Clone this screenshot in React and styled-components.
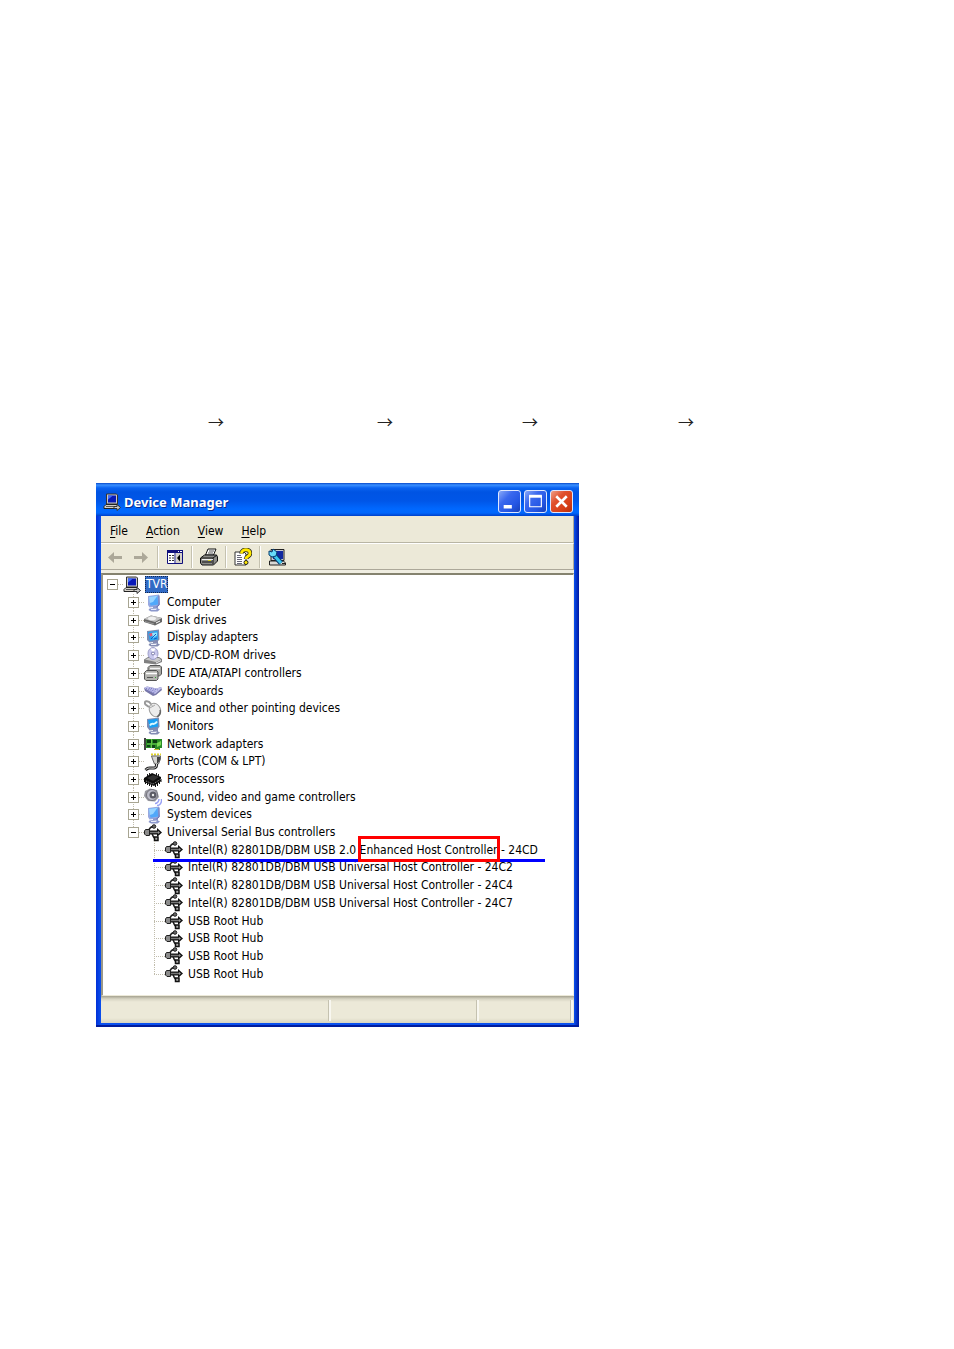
import React from 'react';
import styled, { createGlobalStyle, css } from 'styled-components';

const GlobalStyle = createGlobalStyle`
    * {
        box-sizing: border-box;
    }

    body {
        margin: 0;
        background: #fff;
        color: #000;
        font-family: 'DejaVu Sans Condensed', 'DejaVu Sans', sans-serif;
        font-size: 12px;
    }

    button {
        padding: 0;
        border: 0;
        background: none;
        color: inherit;
        font: inherit;
    }
`;

/* ---------- icons ---------- */

const Icon = ({ size = 18, children }) => (
    <svg width={size} height={size} viewBox="0 0 18 18" aria-hidden="true">{children}</svg>
);

const rootIcon = (
    <Icon>
        <path d="M3.500 1h10l1 1v9h-11z" fill="#c8c8cc" stroke="#333" />
        <path d="M5 2.500h8v7H5z" fill="#0818b8" />
        <path d="M5 2.500h5l-5 4z" fill="#3c6cff" />
        <path d="M3 11.500h11l2 2v2H1v-2z" fill="#d4d0c8" stroke="#222" />
        <path d="M3 13.500h8" stroke="#555" />
        <path d="M11 13.500h3v-2l3.500 3-3.500 3v-2h-3z" fill="#ccc" stroke="#333" />
    </Icon>
);

const monitorIcon = (
    <Icon>
        <path d="M4 2l11-1.500 1 10-2 2-8.500 1L4 11z" fill="#98a8e0" />
        <path d="M5 3l8.500-1.200.7 8.700-7.700 1.200z" fill="#50a8fa" />
        <path d="M5 3l8.500-1.200L9 8l-3.200 1z" fill="#98d4ff" />
        <path d="M9 12.500l5-1v3l2 1-2.500 2H7L4.500 16l1-1.500L9 14z" fill="#8c98cc" />
        <path d="M7 15l6-.5-1 1.500H7z" fill="#e8ecfa" />
        <path d="M15 1.500v9.500l-2.500 2" fill="none" stroke="#6470b4" />
    </Icon>
);

const displayIcon = (
    <Icon>
        <path d="M3 2l12-1.500.5 10-2 2-8 1L3 11z" fill="#7c8cb4" />
        <path d="M4 3l9.500-1.200.5 8.700-8.300 1.200z" fill="#28a4f0" />
        <path d="M5 4.500l5-1-1 3-3 1z" fill="#e05878" />
        <path d="M8 4l5-.5v3L9 9z" fill="#90e4ff" />
        <path d="M7 10l5-5M10 10l3-1" stroke="#1858c0" />
        <path d="M9 12.500l5-1v3l2 1-2.500 2H7L4.500 16l1-1.500L9 14z" fill="#848cb4" />
        <path d="M7 15l6-.5-1 1.500H7z" fill="#f0f2fa" />
    </Icon>
);

const monitorsIcon = (
    <Icon>
        <path d="M3 2l12-1.500.5 9-2 3-8 1L3 10z" fill="#7c8cb4" />
        <path d="M4 3l9.500-1.200.5 7.700-8.300 1.500z" fill="#18a0f4" />
        <path d="M6 8.500c2-4 4 1 7-4" fill="none" stroke="#d8f8ff" strokeWidth="2" />
        <path d="M9 12.500l5-1v3l2 1-2.500 2H7L4.500 16l1-1.500L9 14z" fill="#848cb4" />
        <path d="M7 15l6-.5-1 1.500H7z" fill="#f0f2fa" />
    </Icon>
);

const diskIcon = (
    <Icon>
        <path d="M0 8l7-3.500L18 7v4l-7 3.500L0 11z" fill="#666" />
        <path d="M0 8l7-3.500L18 7l-7 4z" fill="#c4c4c4" />
        <ellipse cx="8" cy="7.500" rx="4" ry="1.800" fill="#f0f0f0" />
        <path d="M1 10.500l9 2.500" stroke="#999" />
        <path d="M12 12l4-2" stroke="#fff" />
    </Icon>
);

const cdIcon = (
    <Icon>
        <path d="M0 12.500L4 10h11l3 2v3l-6 2.500L0 16z" fill="#808080" />
        <path d="M1 12.500L4 11h11l2 1.500-5 2.500z" fill="#c8c8c8" />
        <ellipse cx="9" cy="6.500" rx="5" ry="6" fill="#c8c8ec" stroke="#9c9cc8" />
        <path d="M9 6L6.500 1.500h5z" fill="#fff" />
        <path d="M9 6.500l4.500 3-3 2z" fill="#ece8ff" />
        <circle cx="9" cy="6.500" r="1.500" fill="#fff" stroke="#7878a8" />
        <path d="M12 16l5-2.500" stroke="#eee" />
    </Icon>
);

const ideIcon = (
    <Icon>
        <path d="M4 3.500l2-2h10l1.500 1.500v7l-2 2H4z" fill="#a8a8a4" stroke="#555" />
        <path d="M6 4.500h10" stroke="#f4f4f4" strokeWidth="1.500" />
        <path d="M.5 8.500l2-2h10L14 8v7l-1.500 1.500H2L.5 15z" fill="#b4b4b0" stroke="#555" />
        <path d="M2 9.500h11" stroke="#fff" strokeWidth="1.500" />
        <path d="M3 13.500h6" stroke="#555" />
        <path d="M11 13.500h1" stroke="#3a3" />
    </Icon>
);

const keyboardIcon = (
    <Icon>
        <path d="M0 6l3-1.500 9.500 2L17 5l1 3-6 5-3 1-8-5z" fill="#7878a8" />
        <path d="M0 6l3-1.500 9.500 2L17 5l1 1-7 6z" fill="#c0c0ec" />
        <path d="M2 6.500l10 3M5 6l9 2M3 8.500l8 2.500" stroke="#7474c0" strokeDasharray="1 1" />
    </Icon>
);

const mouseIcon = (
    <Icon>
        <path d="M7 4C4-.5-1 1 1.500 4.500L5 7" fill="none" stroke="#999" strokeWidth="2" />
        <ellipse cx="11" cy="10" rx="5.500" ry="7" transform="rotate(-25 11 10)" fill="#ececec" stroke="#999" />
        <path d="M5 8.500l6-3.500M7 4l2 3" stroke="#aaa" />
        <path d="M16 10c1 3 0 5-3 7" fill="none" stroke="#666" strokeWidth="1.500" />
    </Icon>
);

const networkIcon = (
    <Icon>
        <path d="M1 4h17v9h-2v2h-5v-2H1z" fill="#2a8c28" />
        <path d="M1 3v12" stroke="#444" strokeWidth="2" />
        <path d="M3 5h4v3H3zM9 5h4v3H9z" fill="#0a3c10" />
        <path d="M3 10h3v2H3zM8 10h3v3H8z" fill="#104818" />
        <path d="M13 8l4-2v4l-4 2z" fill="#78d850" />
        <path d="M7.500 4v9M3 9h10" stroke="#64c848" />
        <path d="M10 14.500h5" stroke="#c8b830" />
    </Icon>
);

const portsIcon = (
    <Icon>
        <path d="M7 1.500h10" stroke="#e0d428" strokeWidth="2" strokeDasharray="2 1" />
        <path d="M7.500 3h9v3l-2 5h-4l-2-5z" fill="#d4d4d0" stroke="#666" />
        <path d="M13 4h3v3l-2 3h-1z" fill="#444" />
        <path d="M12.500 11v1c0 4-4 3-7 3-2 0-3 1-4 2" fill="none" stroke="#222" strokeWidth="3" />
        <path d="M12.500 11v1c0 4-4 3-7 3-2 0-3 1-4 2" fill="none" stroke="#ddd" />
    </Icon>
);

const cpuIcon = (
    <Icon>
        <path d="M0 7l8-5 9 4v4l-7 5-10-4z" fill="#0c0c0c" />
        <path d="M3 7l6-3 6 2-6 4z" fill="#303030" />
        <path d="M1.500 10v3M3.500 11v3M5.500 12v3M7.500 13v3M11.500 12v4M13.500 11v4M15.500 10v3M17 8v3" stroke="#111" />
        <path d="M3.500 5V3M5.500 4V2M12.500 4V2M14.500 5V3" stroke="#222" />
        <path d="M2 10l7 3 8-5" fill="none" stroke="#999" strokeDasharray="1 1" />
    </Icon>
);

const soundIcon = (
    <Icon>
        <path d="M1 3l5-2.500L13 2l2 7-4 4.500L4 13 0 8z" fill="#9898a0" />
        <circle cx="8" cy="7" r="5.500" fill="#bcbcc8" stroke="#74747c" />
        <circle cx="9" cy="7" r="3.500" fill="#5c5c66" />
        <circle cx="9" cy="7" r="1.200" fill="#eee" />
        <path d="M11 15.500c2 0 4-2 4-4.500M13 17.500c3 0 5-3 4.500-6.500" fill="none" stroke="#98a0f4" strokeWidth="1.500" />
    </Icon>
);

const usbIcon = (
    <Icon>
        <path d="M4.500 7C6 3 7 3 9 2.500M8 9c1 4 2 5.500 4 6" fill="none" stroke="#222" strokeWidth="1.500" />
        <path d="M5 8.500h9" stroke="#111" strokeWidth="4" />
        <path d="M13 4l5 4.500-5 4.500z" fill="#111" />
        <path d="M5 8.500h10" stroke="#777" strokeWidth="1.500" />
        <path d="M14 7l2 1.500-2 1.500z" fill="#999" />
        <path d="M.5 7l1-1.500h4v6H2L.5 10z" fill="#8c8c8c" stroke="#222" />
        <circle cx="10" cy="2.500" r="1.800" fill="#666" stroke="#222" />
        <path d="M10.500 13h3.500v3.500h-3.500z" fill="#aaa" stroke="#111" strokeWidth="1.500" />
    </Icon>
);

const backIcon = (
    <Icon><path d="M8 4v4h8v3H8v4L2 9.500z" fill="#aca899" /></Icon>
);

const forwardIcon = (
    <Icon><path d="M10 4v4H2v3h8v4l6-5.500z" fill="#aca899" /></Icon>
);

const propertiesIcon = (
    <Icon>
        <path d="M1.500 3h15v12.500h-15z" fill="#fff" stroke="#10107c" />
        <path d="M1 2h16v3H1z" fill="#10107c" />
        <path d="M12 3.500h1M14 3.500h2" stroke="#fff" />
        <path d="M9 5v11" stroke="#10107c" />
        <path d="M3 7.500h2M3 10h2M3 12.500h2M6 7.500h2M6 10h2M6 12.500h2" stroke="#333" />
        <path d="M10 5h6v10h-6z" fill="#d4d0c8" />
        <path d="M14 6.500v7L11 10z" fill="#000" />
    </Icon>
);

const printerIcon = (
    <Icon>
        <path d="M5.500 7l2.500-6h8l-2.500 6z" fill="#fff" stroke="#111" />
        <path d="M9 3h5M8 5h5" stroke="#555" />
        <path d="M.5 10l4-3h12l1 2v4l-4 4H2l-1.500-2z" fill="#8c8c88" stroke="#111" />
        <path d="M1 10h12l4-3M13 10v6" fill="none" stroke="#111" />
        <path d="M2 11.500h11" stroke="#eee" />
        <path d="M2 14h10" stroke="#111" />
        <path d="M8 12.500h3" stroke="#d8d020" />
    </Icon>
);

const helpIcon = (
    <Icon>
        <path d="M1 4h9l2 2v11H1z" fill="#fff" stroke="#333" />
        <path d="M3 7.500h4M3 9.500h5M3 11.500h5M3 13.500h5M3 15.500h5" stroke="#667" />
        <path d="M7.500 5.500c0-5 9-5 8.500 0 0 3-4 2.500-4 5.500" fill="none" stroke="#222" strokeWidth="4.500" />
        <path d="M7.500 5.500c0-5 9-5 8.500 0 0 3-4 2.500-4 5.500" fill="none" stroke="#ffe800" strokeWidth="3" />
        <circle cx="12" cy="14.500" r="2" fill="#ffe800" stroke="#222" />
    </Icon>
);

const scanIcon = (
    <Icon>
        <path d="M3 1.500h13v11H3z" fill="#c8c8d0" stroke="#222" />
        <path d="M5 3h10v8H5z" fill="#1028a0" />
        <path d="M1.500 13h14l2 2v2h-16z" fill="#d8d8d4" stroke="#222" />
        <path d="M5 6l8 9" stroke="#073c70" strokeWidth="5" />
        <path d="M5 6l8 9" stroke="#38c8f0" strokeWidth="3" />
        <path d="M1 3l3 1 1-3 4 3-1 4-4 1-3-2z" fill="#68dcf8" stroke="#073c70" />
        <path d="M14 15.500h3" stroke="#222" />
    </Icon>
);

const minimizeIcon = (
    <Icon size={21}><path d="M4 12h7v3H4z" fill="#fff" /></Icon>
);

const maximizeIcon = (
    <Icon size={21}>
        <path d="M4 4.500h10v9H4z" fill="none" stroke="#fff" />
        <path d="M3.500 4.500h11" stroke="#fff" strokeWidth="2.500" />
    </Icon>
);

const closeIcon = (
    <Icon size={21}><path d="M4.500 4.500l9 9M13.500 4.500l-9 9" stroke="#fff" strokeWidth="2.200" /></Icon>
);

/* ---------- data ---------- */

const menus = ['File', 'Action', 'View', 'Help'];

const tools = [
    { label: 'Properties', icon: propertiesIcon },
    { label: 'Print', icon: printerIcon },
    { label: 'Help', icon: helpIcon },
    { label: 'Scan for hardware changes', icon: scanIcon },
];

const nodes = [
    { level: 0, label: 'TVR', icon: rootIcon, open: true, selected: true },
    { level: 1, label: 'Computer', icon: monitorIcon },
    { level: 1, label: 'Disk drives', icon: diskIcon },
    { level: 1, label: 'Display adapters', icon: displayIcon },
    { level: 1, label: 'DVD/CD-ROM drives', icon: cdIcon },
    { level: 1, label: 'IDE ATA/ATAPI controllers', icon: ideIcon },
    { level: 1, label: 'Keyboards', icon: keyboardIcon },
    { level: 1, label: 'Mice and other pointing devices', icon: mouseIcon },
    { level: 1, label: 'Monitors', icon: monitorsIcon },
    { level: 1, label: 'Network adapters', icon: networkIcon },
    { level: 1, label: 'Ports (COM & LPT)', icon: portsIcon },
    { level: 1, label: 'Processors', icon: cpuIcon },
    { level: 1, label: 'Sound, video and game controllers', icon: soundIcon },
    { level: 1, label: 'System devices', icon: monitorIcon },
    { level: 1, label: 'Universal Serial Bus controllers', icon: usbIcon, open: true, last: true },
    {
        level: 2,
        label: <>Intel(R) 82801DB/DBM USB 2.0 <Marked>Enhanced Host Controller</Marked> - 24CD</>,
        icon: usbIcon,
        underlined: true,
    },
    { level: 2, label: 'Intel(R) 82801DB/DBM USB Universal Host Controller - 24C2', icon: usbIcon },
    { level: 2, label: 'Intel(R) 82801DB/DBM USB Universal Host Controller - 24C4', icon: usbIcon },
    { level: 2, label: 'Intel(R) 82801DB/DBM USB Universal Host Controller - 24C7', icon: usbIcon },
    { level: 2, label: 'USB Root Hub', icon: usbIcon },
    { level: 2, label: 'USB Root Hub', icon: usbIcon },
    { level: 2, label: 'USB Root Hub', icon: usbIcon },
    { level: 2, label: 'USB Root Hub', icon: usbIcon, last: true },
];

/* ---------- components ---------- */

function Marked({ children }) {
    return <MarkedStyled>{children}</MarkedStyled>;
}

function TreeRow({ level, label, icon, open, selected, last, underlined }) {
    return (
        <RowStyled role="treeitem" aria-level={level + 1} $level={level} $underlined={underlined}>
            <Branch $line={level > 0} $last={last}>
                {level < 2 && (
                    <Expander aria-label={open ? 'Collapse' : 'Expand'}>
                        <svg width="9" height="9" viewBox="0 0 9 9" aria-hidden="true">
                            <path d={open ? 'M2 4.500h5' : 'M2 4.500h5M4.500 2v5'} stroke="#000" />
                        </svg>
                    </Expander>
                )}
            </Branch>
            {icon}
            <Label $selected={selected}>{label}</Label>
        </RowStyled>
    );
}

function App() {
    return (
        <>
            <GlobalStyle />
            <Page>
                <Steps>
                    <span>→</span>
                    <span>→</span>
                    <span>→</span>
                    <span>→</span>
                </Steps>
                <Window>
                    <TitleBar>
                        {rootIcon}
                        <h1>Device Manager</h1>
                        <CaptionButton aria-label="Minimize">{minimizeIcon}</CaptionButton>
                        <CaptionButton aria-label="Maximize">{maximizeIcon}</CaptionButton>
                        <CaptionButton aria-label="Close" $close>{closeIcon}</CaptionButton>
                    </TitleBar>
                    <MenuBar>
                        {menus.map(name => (
                            <MenuButton key={name}><u>{name[0]}</u>{name.slice(1)}</MenuButton>
                        ))}
                    </MenuBar>
                    <ToolBar>
                        <ToolButton aria-label="Back" disabled>{backIcon}</ToolButton>
                        <ToolButton aria-label="Forward" disabled>{forwardIcon}</ToolButton>
                        {tools.map(({ label, icon }) => (
                            <React.Fragment key={label}>
                                <Separator />
                                <ToolButton aria-label={label}>{icon}</ToolButton>
                            </React.Fragment>
                        ))}
                    </ToolBar>
                    <Panel>
                        <Tree role="tree">
                            {nodes.map((node, i) => <TreeRow key={i} {...node} />)}
                        </Tree>
                    </Panel>
                    <StatusBar>
                        <span />
                        <span />
                        <span />
                    </StatusBar>
                </Window>
            </Page>
        </>
    );
}

const Page = styled.main`
    padding: 409px 96px 322px;
`;

const Steps = styled.div`
    display: grid;
    grid-template-columns: 169px 145px 156px auto;
    padding-left: 112px;
    margin-bottom: 50px;
    color: #222;
    font-family: 'Noto Sans CJK JP', sans-serif;
    font-size: 16px;
    line-height: 24px;
`;

const Window = styled.section`
    max-width: 483px;
    padding: 0 5px 2px;
    background: linear-gradient(90deg, #0030d8, #0a50ee 5px, #0a50ee calc(100% - 5px), #0018a0);
    border-bottom: 2px solid #001c9c;
`;

const TitleBar = styled.header`
    display: flex;
    align-items: center;
    gap: 3px;
    height: 33px;
    margin: 0 -5px;
    padding: 4px 6px 0 7px;
    background: linear-gradient(#0848c8, #3a90ff 2px, #0a62f0 5px, #0054e3 9px, #0056e8 18px, #0068ff 26px, #0066fc 30px, #0040c8);

    h1 {
        flex: 1;
        margin: 0;
        color: #fff;
        font-family: 'Noto Sans', sans-serif;
        font-size: 13px;
        font-weight: 700;
        text-shadow: 1px 1px #0a2c90;
    }
`;

const CaptionButton = styled.button`
    display: grid;
    place-items: center;
    width: 23px;
    height: 23px;
    border: 1px solid #dfe8ff;
    border-radius: 3px;
    background: ${props => props.$close
        ? 'linear-gradient(135deg, #f0a088, #e0502c 35%, #d84018 70%, #b83010)'
        : 'linear-gradient(135deg, #88a8f8, #3a68ee 35%, #2456e4 70%, #1840b8)'};
`;

const MenuBar = styled.nav`
    display: flex;
    height: 27px;
    background: #ece9d8;
    border-right: 1px solid #aca899;
    border-bottom: 1px solid #b8b5a4;
`;

const MenuButton = styled.button`
    padding: 4px 9px 0;

    u {
        text-underline-offset: 2px;
    }
`;

const ToolBar = styled.div`
    display: flex;
    align-items: center;
    height: 27px;
    padding-left: 1px;
    background: #ece9d8;
    border-top: 1px solid #fff;
    border-right: 1px solid #aca899;
    border-bottom: 1px solid #aca899;
`;

const ToolButton = styled.button`
    display: grid;
    place-items: center;
    width: 26px;
    height: 24px;
`;

const Separator = styled.span`
    width: 2px;
    height: 22px;
    margin: 0 3px;
    background: linear-gradient(90deg, #c5c2b0 1px, #fff 1px);
`;

const Panel = styled.div`
    padding: 1px 0 12px;
    background: #fff;
    border-top: 2px solid #85836f;
    border-left: 2px solid #9a9889;
    border-right: 1px solid #f1efe2;
    border-bottom: 1px solid #ece9d8;
    box-shadow: 0 -3px #f0eee2;
    margin-top: 3px;
`;

const Tree = styled.div`
    display: grid;
    grid-auto-rows: 1fr;
    height: 407px;
`;

const dots = css`
    repeating-linear-gradient(#c0bcac 0 1px, transparent 1px 2px) 5px 0 / 1px ${props => props.$last ? '50%' : '100%'} no-repeat,
`;

const Branch = styled.span`
    display: flex;
    align-items: center;
    flex: none;
    align-self: stretch;
    width: 16px;
    background: ${props => props.$line && dots}
        repeating-linear-gradient(90deg, #c0bcac 0 1px, transparent 1px 2px) 5px 50% / 11px 1px no-repeat;
`;

const Expander = styled.button`
    display: grid;
    place-items: center;
    width: 11px;
    height: 11px;
    border: 1px solid #a8a592;
    background: #fff;
`;

const RowStyled = styled.div`
    position: relative;
    display: flex;
    align-items: center;
    min-height: 0;
    padding-left: ${props => 4 + props.$level * 21}px;
    white-space: nowrap;

    > svg {
        flex: none;
    }

    ${props => props.$underlined && css`
        z-index: 1;

        &::after {
            content: '';
            position: absolute;
            left: 50px;
            bottom: -3px;
            width: 392px;
            height: 3px;
            background: #0000ff;
        }
    `}
`;

const Label = styled.span`
    margin-left: 4px;
    padding: 0 1px;
    line-height: 17px;

    ${props => props.$selected && css`
        background: #316ac5;
        color: #fff;
        outline: 1px dotted #14284c;
        outline-offset: -1px;
    `}
`;

const MarkedStyled = styled.span`
    position: relative;

    &::after {
        content: '';
        position: absolute;
        z-index: 1;
        inset: -7px -2px -5px -2px;
        border: 3px solid #ff0000;
    }
`;

const StatusBar = styled.footer`
    display: grid;
    grid-template-columns: 230fr 147fr 94fr;
    height: 27px;
    padding: 4px 1px 2px 0;
    background: linear-gradient(#a5a290, #d8d5c4 3px, #ece9d8 6px, #ece9d8 22px, #d8d5c0);

    span {
        border-right: 2px solid #f8f7f0;
        box-shadow: inset -1px 0 #c5c2b0;
    }
`;

export default App;
